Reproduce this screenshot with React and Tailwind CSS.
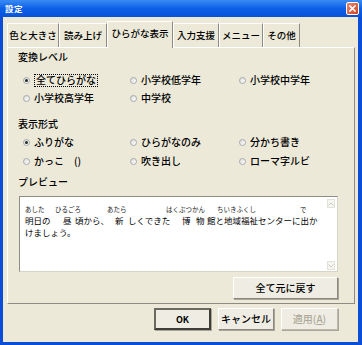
import React from "react";

const FONT = { fontFamily: '"Noto Sans CJK JP", "Noto Sans", sans-serif' };

function Radio({ checked, label, focused }) {
  return (
    <div className="flex items-center h-full">
      <span className="w-[7px] h-[7px] rounded-full border border-[#A4A9AE] bg-gradient-to-br from-[#DCDCD6] to-white flex items-center justify-center shrink-0">
        {checked && <span className="w-[3px] h-[3px] rounded-full bg-[#1F2A1F]" />}
      </span>
      {focused ? (
        <span className="ml-[4px] border border-dotted border-black px-[1px] h-[13px] flex items-center leading-none">
          {label}
        </span>
      ) : (
        <span className="ml-[4px] leading-none">{label}</span>
      )}
    </div>
  );
}

function Tab({ label, w, selected }) {
  if (selected) {
    return (
      <div
        className={`${w} h-[27px] -mb-[1px] relative z-10 bg-[#ECE9D8] border-l border-t border-white border-r border-r-[#8E8C82] flex items-center justify-center text-[9.5px] leading-none font-medium`}
      >
        <span className="-mt-[2px]">{label}</span>
      </div>
    );
  }
  return (
    <div
      className={`${w} h-[24px] bg-[#ECE9D8] border-l border-t border-white border-r border-r-[#8E8C82] flex items-center justify-center text-[9.5px] leading-none font-medium`}
    >
      {label}
    </div>
  );
}

function Btn({ children, w, kind }) {
  const border =
    kind === "default"
      ? "border-[2px] border-t-[#6B6A62] border-l-[#6B6A62] border-r-[#3E3D38] border-b-[#3E3D38]"
      : kind === "disabled"
      ? "border border-t-white border-l-white border-r-[#BDBAAC] border-b-[#BDBAAC]"
      : "border border-t-white border-l-white border-r-[#8A887E] border-b-[#8A887E]";
  const text = kind === "disabled" ? "text-[#ACA899]" : "text-black";
  return (
    <div
      className={`${w} h-[22px] bg-[#EFEDE3] ${border} ${text} flex items-center justify-center text-[10px] leading-none font-medium shadow-[1px_1px_0_#A8A69A]`}
    >
      {children}
    </div>
  );
}

function ScrollArrow({ up }) {
  return (
    <div className="w-[8px] h-[9px] border border-[#E2E2DA] bg-[#F6F6F2] flex items-center justify-center">
      <svg width="6" height="4" viewBox="0 0 6 4">
        {up ? (
          <path d="M0.5 3.5 L3 1 L5.5 3.5" stroke="#C9C9C0" strokeWidth="1" fill="none" />
        ) : (
          <path d="M0.5 0.5 L3 3 L5.5 0.5" stroke="#C9C9C0" strokeWidth="1" fill="none" />
        )}
      </svg>
    </div>
  );
}

export default function App() {
  return (
    <div
      className="w-[362px] h-[345px] flex flex-col bg-[#0A4ED8] overflow-hidden text-black"
      style={FONT}
    >
      {/* Title bar */}
      <div className="h-[17px] shrink-0 flex items-center justify-between bg-gradient-to-b from-[#3A8BF5] via-[#0C5FE6] to-[#0653DA] pl-[5px] pr-[3px]">
        <span className="text-white text-[8.5px] leading-none font-bold tracking-[0.5px]">設定</span>
        <div className="w-[13px] h-[13px] rounded-[2px] border border-white bg-gradient-to-br from-[#E8876A] to-[#D0401C] flex items-center justify-center">
          <svg width="7" height="7" viewBox="0 0 7 7">
            <path d="M1 1 L6 6 M6 1 L1 6" stroke="white" strokeWidth="1.6" strokeLinecap="square" />
          </svg>
        </div>
      </div>

      {/* Body */}
      <div className="flex-1 ml-[3px] mr-[4px] mb-[3px] bg-[#ECE9D8] flex flex-col">
        {/* Tabs */}
        <div className="pt-[4px] pl-[4px] h-[30px] flex items-end shrink-0">
          <Tab label="色と大きさ" w="w-[52px]" />
          <Tab label="読み上げ" w="w-[48px]" />
          <Tab label="ひらがな表示" w="w-[66px]" selected />
          <Tab label="入力支援" w="w-[46px]" />
          <Tab label="メニュー" w="w-[44px]" />
          <Tab label="その他" w="w-[37px]" />
        </div>

        {/* Panel */}
        <div className="ml-[4px] mr-[3px] h-[257px] shrink-0 border-l border-t border-white border-r border-b border-r-[#8E8C82] border-b-[#8E8C82] flex flex-col text-[10px] font-medium">
          <div className="h-[18px] pl-[10px] flex items-center leading-none">変換レベル</div>
          <div className="mt-[5px] pl-[15px] grid grid-cols-[107px_109px_1fr] grid-rows-[18px_18px]">
            <Radio checked focused label="全てひらがな" />
            <Radio label="小学校低学年" />
            <Radio label="小学校中学年" />
            <Radio label="小学校高学年" />
            <Radio label="中学校" />
            <div />
          </div>

          <div className="mt-[8px] h-[18px] pl-[10px] flex items-center leading-none">表示形式</div>
          <div className="pl-[15px] grid grid-cols-[107px_109px_1fr] grid-rows-[18px_18px] gap-y-[1px]">
            <Radio checked label="ふりがな" />
            <Radio label="ひらがなのみ" />
            <Radio label="分かち書き" />
            <Radio label="かっこ　()" />
            <Radio label="吹き出し" />
            <Radio label="ローマ字ルビ" />
          </div>

          <div className="mt-[3px] h-[18px] pl-[10px] flex items-center leading-none">プレビュー</div>

          {/* Preview box */}
          <div className="mt-[5px] ml-[11px] mr-[16px] h-[76px] bg-white border border-t-[#8F8E84] border-l-[#8F8E84] border-r-[#D6D4CA] border-b-[#D6D4CA] flex font-normal">
            <div className="flex-1 pt-[7px] pl-[5px] flex flex-col">
              <div className="h-[10px] flex items-center text-[6.5px] leading-none text-[#222] whitespace-nowrap">
                <span className="w-[30px] shrink-0">あした</span>
                <span className="w-[52px] shrink-0">ひるごろ</span>
                <span className="w-[59px] shrink-0">あたら</span>
                <span className="w-[51px] shrink-0">はくぶつかん</span>
                <span className="w-[83px] shrink-0">ちいきふくし</span>
                <span className="shrink-0">で</span>
              </div>
              <div className="h-[12px] flex items-center text-[8.5px] leading-none whitespace-nowrap">
                <span className="w-[38px] shrink-0">明日の</span>
                <span className="w-[12px] shrink-0">昼</span>
                <span className="w-[40px] shrink-0">頃から、</span>
                <span className="w-[13px] shrink-0">新</span>
                <span className="w-[54px] shrink-0">しくできた</span>
                <span className="w-[14px] shrink-0">博</span>
                <span className="w-[11px] shrink-0">物</span>
                <span className="shrink-0">館と地域福祉センターに出か</span>
              </div>
              <div className="h-[12px] flex items-center text-[8.5px] leading-none">けましょう。</div>
            </div>
            <div className="w-[9px] mr-[1px] pt-[2px] pb-[1px] flex flex-col justify-between">
              <ScrollArrow up />
              <ScrollArrow />
            </div>
          </div>

          <div className="mt-[5px] mr-[16px] flex justify-end">
            <Btn w="w-[105px]">全て元に戻す</Btn>
          </div>
        </div>

        {/* Bottom buttons */}
        <div className="mt-[4px] pr-[20px] flex justify-end gap-[7px]">
          <Btn w="w-[57px]" kind="default">
            <span className="text-[9px] font-bold">OK</span>
          </Btn>
          <Btn w="w-[56px]">キャンセル</Btn>
          <Btn w="w-[57px]" kind="disabled">
            <span>
              適用(<span className="underline">A</span>)
            </span>
          </Btn>
        </div>
      </div>
    </div>
  );
}
